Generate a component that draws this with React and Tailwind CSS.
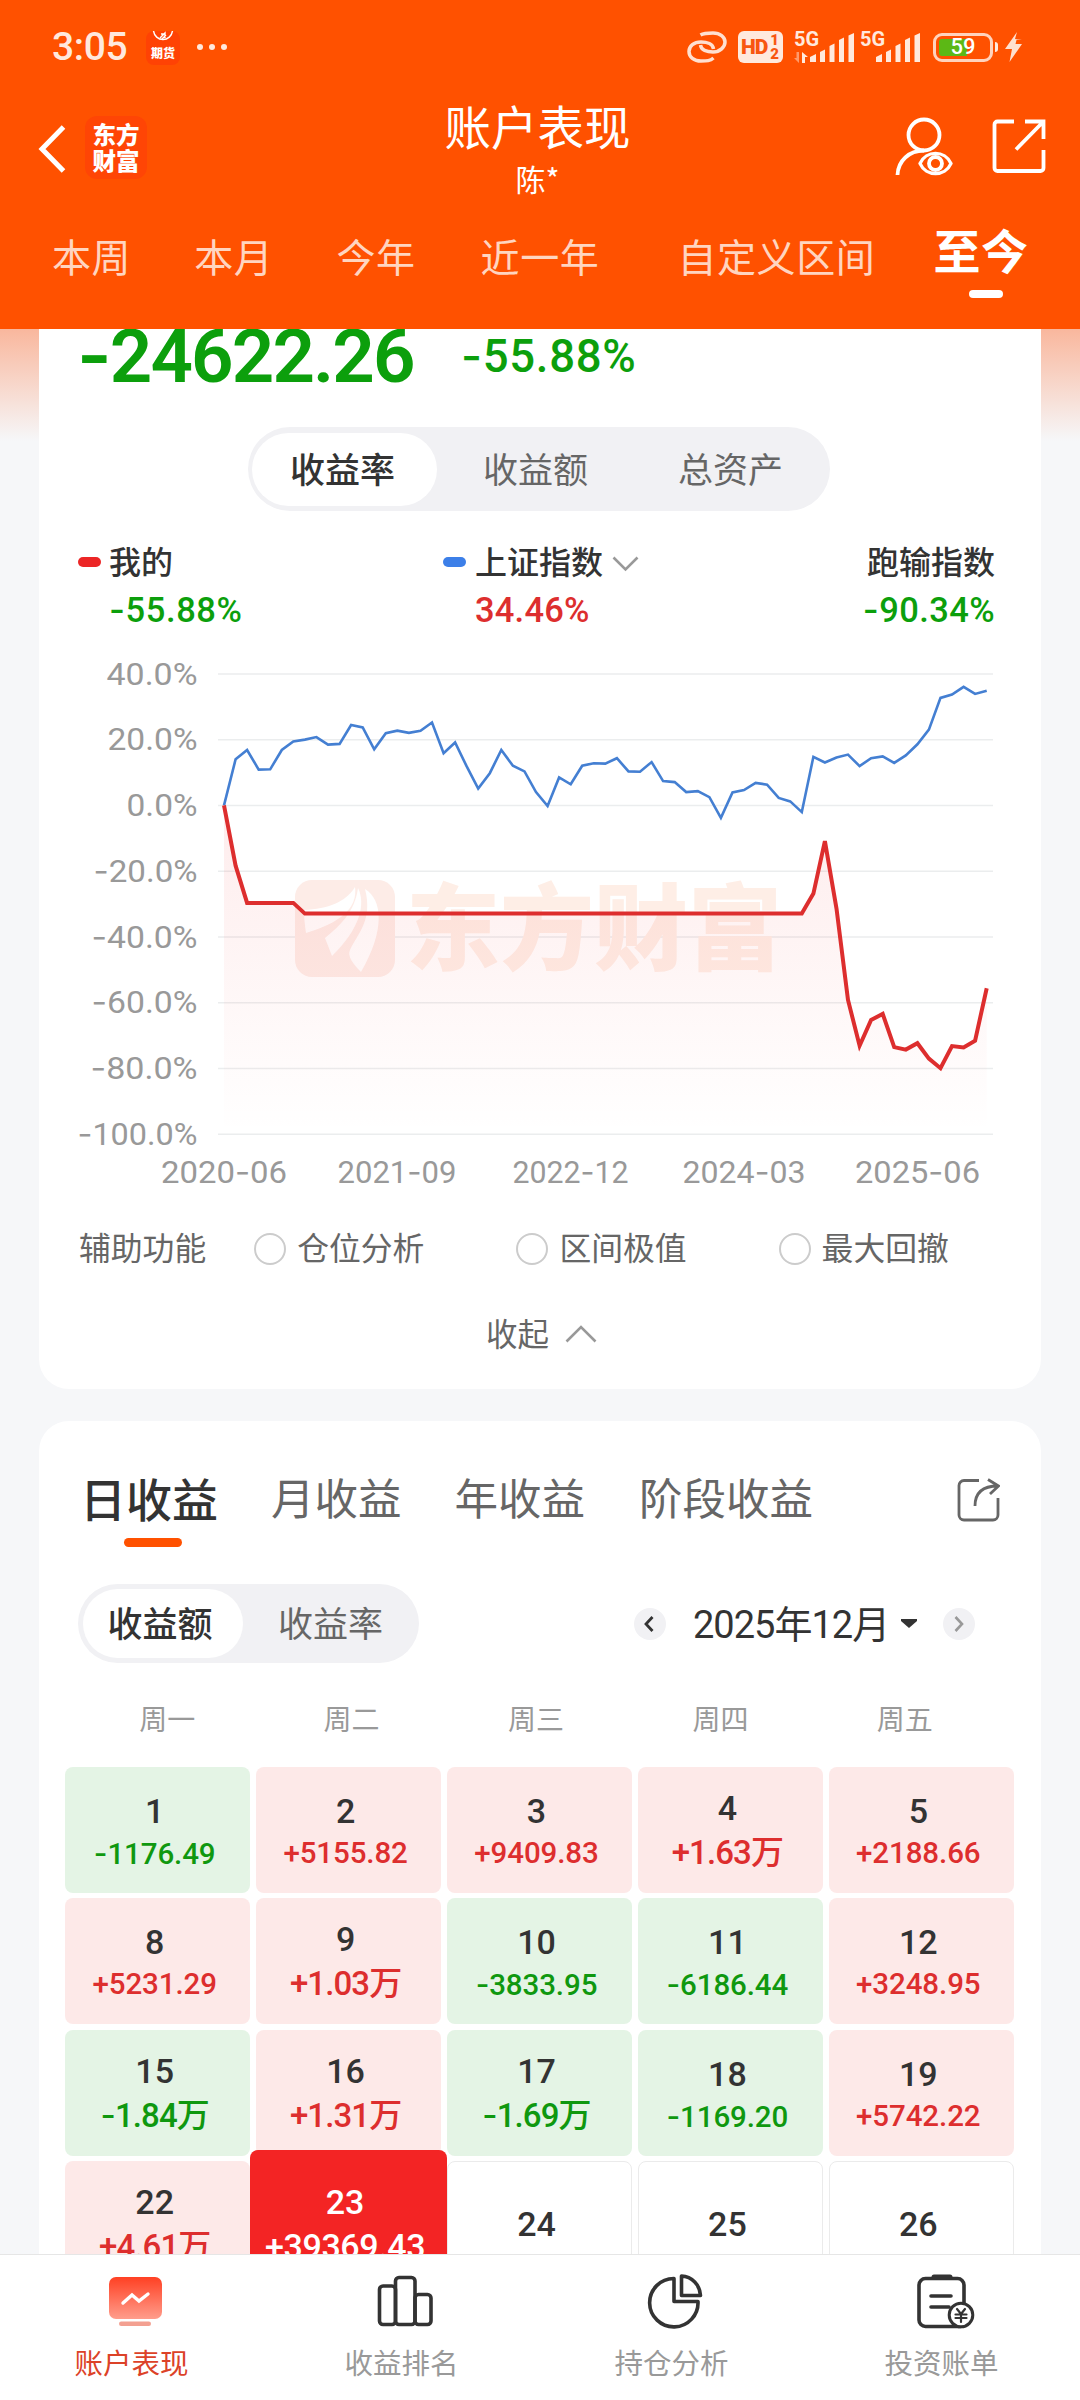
import React from "react";

const NUM = 'font-["Roboto","Noto_Sans_CJK_SC",sans-serif]';

/* Inter carries a wider hyphen, which reads better as a minus sign. */
function Num({ children, className = "" }) {
  const parts = String(children).split(/(-)/);
  return (
    <span className={`${NUM} whitespace-nowrap leading-none ${className}`}>
      {parts.map((p, i) =>
        p === "-" ? (
          <span key={i} className="font-[Inter,sans-serif]">-</span>
        ) : (
          p
        )
      )}
    </span>
  );
}

function Signal() {
  return (
    <svg width="45" height="30" viewBox="0 0 45 30" fill="#ffe9dd">
      <path d="M0 29v-5l6-3v8z" />
      <path d="M10 29V19l5-2.500V29z" />
      <path d="M19.500 29V13l5-2.500V29z" />
      <path d="M29 29V7l5-2.500V29z" />
      <path d="M38.500 29V2.500L44 0v29z" />
    </svg>
  );
}

function StatusBar() {
  return (
    <div className="flex h-[94px] items-center pl-[52px] text-[#ffe9dd]">
      <Num className="w-[94px] text-[39px] font-medium tracking-[-0.4px]">3:05</Num>
      <div className="mt-[1px] flex h-[34px] w-[34px] flex-col items-center rounded-[8px] bg-[#ff4204]">
        <svg width="22" height="13" viewBox="0 0 22 13" fill="none" stroke="#fff" strokeWidth="1.500">
          <path d="M1.500 0a9.600 10 0 0 0 19 0" />
          <path d="M8 7l5-5v5M9 3l4 0M10 8l4-4" strokeWidth="1.400" />
        </svg>
        <span className="mt-[2px] text-[12px] font-black leading-[14px] text-white">期货</span>
      </div>
      <div className="ml-[17px] flex gap-[6px]">
        <i className="size-[6px] rounded-full bg-[#ffe9dd]" />
        <i className="size-[6px] rounded-full bg-[#ffe9dd]" />
        <i className="size-[6px] rounded-full bg-[#ffe9dd]" />
      </div>
      <svg className="ml-[460px]" width="40" height="32" viewBox="0 0 40 32" fill="none" stroke="#ffe0d0" strokeWidth="3.500">
        <path d="M13.500 4C17 2 20 2 26 2c7 0 12 4 12 9s-5 10-12 10c-6 0-12-2-12.500-7" />
        <path d="M26.500 27C23 30 20 30 14 30 7 30 2 26 2 20.500S7 11 14 11c6 0 12 2 12.500 7" />
      </svg>
      <div className="ml-[11px] flex h-[32px] w-[45px] rounded-[6px] bg-[#ffe9dd] text-[#f8560f]">
        <span className="ml-[3px] font-[Roboto] text-[21px] font-black leading-[33px] tracking-[-1px]">HD</span>
        <span className="ml-[3px] flex flex-col pt-[2px] font-[Roboto] text-[15px] font-bold leading-[14px]">
          <b>1</b>
          <b>2</b>
        </span>
      </div>
      <div className="ml-[11px] flex h-[32px] items-end">
        <div className="flex h-[32px] w-[16px] flex-col">
          <span className="font-[Roboto] text-[20px] font-bold leading-[17px]">5G</span>
          <svg className="mt-[4px]" width="14" height="11" viewBox="0 0 14 11">
            <path d="M5 0v11L0 6h2.500V0z" fill="#ff9a6b" />
            <path d="M8 11V0l6 5h-3v6z" fill="#ffe9dd" />
          </svg>
        </div>
        <Signal />
      </div>
      <div className="ml-[5px] flex h-[32px] items-end">
        <div className="flex h-[32px] w-[16px] flex-col">
          <span className="font-[Roboto] text-[20px] font-bold leading-[17px]">5G</span>
        </div>
        <Signal />
      </div>
      <div className="ml-[12px] flex h-[29px] w-[60px] rounded-[9px] border-[3px] border-[#ffd3bd] p-[3px]">
        <div className="flex h-full w-full items-center justify-center rounded-[3px] bg-[linear-gradient(90deg,#5cb815_59%,transparent_59%)] font-[Roboto] text-[22px] font-medium leading-none text-white">
          59
        </div>
      </div>
      <i className="ml-[2px] h-[10px] w-[3px] rounded-r-[3px] bg-[#ffe9dd]" />
      <svg className="ml-[7px]" width="17" height="30" viewBox="0 0 17 30" fill="#ffe0d0">
        <path d="M12 0L0 17h7L4.500 30 17 12h-6.500l1-4H17l-7-1z" />
      </svg>
    </div>
  );
}

function Header() {
  return (
    <header className="flex h-[329px] shrink-0 flex-col bg-[#ff5100] text-white">
      <StatusBar />
      <div className="flex h-[106px] items-center">
        <div className="flex w-[300px] items-center pl-[38px]">
          <svg className="mt-[3px]" width="28" height="48" viewBox="0 0 28 48" fill="none" stroke="#fff" strokeWidth="5">
            <path d="M25.500 2L4 24l21.500 22" />
          </svg>
          <div className="ml-[19px] flex h-[63px] w-[62px] flex-col items-center justify-center rounded-[12px] bg-[#ff4505] text-[23.500px] font-black leading-[26px]">
            <span>东方</span>
            <span>财富</span>
          </div>
        </div>
        <div className="flex flex-1 flex-col items-center pr-[5px]">
          <h1 className="text-[46.500px] leading-[47px]">账户表现</h1>
          <span className="mt-[15px] text-[30px] leading-[30px]">陈*</span>
        </div>
        <div className="flex w-[300px] justify-end pr-[34px]">
          <svg width="58" height="60" viewBox="0 0 58 60" fill="none" stroke="#fff" strokeWidth="3.800">
            <circle cx="29" cy="18" r="15.500" />
            <path d="M2.500 58C3 44 14 33.500 29 33.500" />
            <path d="M25 46.500C31 33 50 33 56 46.500 50 60 31 60 25 46.500z" strokeWidth="3.200" />
            <circle cx="40.500" cy="46.500" r="6.500" />
          </svg>
          <svg className="ml-[39px] mt-[2px]" width="54" height="54" viewBox="0 0 54 54" fill="none" stroke="#fff" strokeWidth="3.800">
            <path d="M22 2.500H5.500a3 3 0 0 0-3 3V49a3 3 0 0 0 3 3H48.500a3 3 0 0 0 3-3V31" />
            <path d="M33 2.500h18.500V20M51 3L24 30.500" />
          </svg>
        </div>
      </div>
      <nav className="flex h-[128px] items-start pl-[52px] text-[39px] leading-[39px] tracking-[0.6px] text-[#ffd5c0]">
        <span className="mt-[36px]">本周</span>
        <span className="ml-[63px] mt-[36px]">本月</span>
        <span className="ml-[63px] mt-[36px]">今年</span>
        <span className="ml-[65px] mt-[36px]">近一年</span>
        <span className="ml-[78px] mt-[36px]">自定义区间</span>
        <span className="ml-[58px] mt-[25px] flex flex-col items-center text-[47px] font-bold leading-[47px] text-white">
          至今
          <i className="ml-[9px] mt-[18px] h-[8px] w-[34px] rounded-full bg-white" />
        </span>
      </nav>
    </header>
  );
}

/* Vertical positions of the monthly points, 2.8 units per pixel from the top of the plot. */
const INDEX = [
  463, 334, 308, 363, 362, 308, 284, 279, 272, 293, 291, 238, 245, 306, 261, 254, 260, 254, 231, 317,
  287, 354, 416, 373, 308, 352, 368, 426, 465, 385, 404, 352, 345, 346, 331, 368, 369, 342, 395, 398,
  426, 423, 440, 498, 427, 420, 400, 405, 442, 452, 482, 327, 343, 329, 321, 353, 331, 326, 344, 323,
  292, 251, 162, 153, 131, 151, 142,
];
const MINE = [
  463, 632, 736, 736, 736, 736, 736, ...Array(44).fill(766), 710, 563, 752, 1008, 1136, 1064, 1047,
  1140, 1147, 1129, 1172, 1199, 1137, 1141, 1122, 975,
];
const X0 = 224;
const STEP = 11.556;
const points = (data) =>
  data.map((v, i) => `${(X0 + i * STEP).toFixed(1)},${(640 + v / 2.8).toFixed(1)}`).join(" ");

const Y_LABELS = [
  ["40.0%", 91],
  ["20.0%", 90],
  ["0.0%", 71],
  ["-20.0%", 104],
  ["-40.0%", 106],
  ["-60.0%", 106],
  ["-80.0%", 107],
  ["-100.0%", 120],
];
const X_LABELS = [
  ["2020-06", 224, 126],
  ["2021-09", 397, 119],
  ["2022-12", 570.5, 116],
  ["2024-03", 744, 123],
  ["2025-06", 917.5, 125],
];

function SvgNum({ text }) {
  return text.split(/(-)/).filter(Boolean).map((p, i) =>
    p === "-" ? (
      <tspan key={i} fontFamily="Inter">-</tspan>
    ) : (
      <tspan key={i}>{p}</tspan>
    )
  );
}

function Chart() {
  return (
    <svg className="block" width="1002" height="560" viewBox="39 640 1002 560">
      <defs>
        <linearGradient id="area" x1="0" x2="0" y1="805" y2="1134" gradientUnits="userSpaceOnUse">
          <stop offset="0" stopColor="#f22323" stopOpacity="0.085" />
          <stop offset="1" stopColor="#f22323" stopOpacity="0" />
        </linearGradient>
      </defs>
      {Y_LABELS.map(([label, w], i) => (
        <g key={label}>
          <line x1="218" x2="993" y1={673.9 + i * 65.77} y2={673.9 + i * 65.77} stroke="#ebedee" strokeWidth="1.500" />
          <text x={197.5 - w} y={684.5 + i * 65.77} textLength={w} lengthAdjust="spacingAndGlyphs" fontSize="31.500" fontFamily="Roboto" fill="#999">
            <SvgNum text={label} />
          </text>
        </g>
      ))}
      <g fill="#fdece7">
        <rect x="295" y="880" width="100" height="97" rx="17" />
        <text x="406" y="963" fontSize="94" fontWeight="900" textLength="376" fontFamily="Noto Sans CJK SC" fill="#feeee6">
          东方财富
        </text>
      </g>
      <g fill="#fff">
        <path d="M304 910c24-1 42-8 51-23 3 21-15 36-49 46-1-8-2-14-2-23z" />
        <path d="M358 888c8 16 2 41-26 68l-7-18c16-13 30-27 33-50z" />
        <path d="M365 889c18 11 20 42-4 83-8-8-14-16-11-22 8-17 23-30 15-61z" />
      </g>
      <polygon points={`${X0},805.4 ${points(MINE)} 986.7,1134 ${X0},1134`} fill="url(#area)" />
      <polyline points={points(INDEX)} fill="none" stroke="#447fd2" strokeWidth="2.600" />
      <polyline points={points(MINE)} fill="none" stroke="#dd2e2e" strokeWidth="4" />
      {X_LABELS.map(([label, cx, w]) => (
        <text key={label} x={cx - w / 2} y="1182.500" textLength={w} lengthAdjust="spacingAndGlyphs" fontSize="31.500" fontFamily="Roboto" fill="#999">
          <SvgNum text={label} />
        </text>
      ))}
    </svg>
  );
}

function Option({ children, className }) {
  return (
    <span className={`flex items-center ${className}`}>
      <i className="mr-[11px] size-[32px] rounded-full border-2 border-[#ccc]" />
      <span className="pb-[4px]">{children}</span>
    </span>
  );
}

function PerformanceCard() {
  return (
    <section className="mx-[39px] h-[1060px] shrink-0 rounded-b-[30px] bg-white">
      <div className="flex h-[55px] items-center pl-[38px] text-[#0c9f0c]">
        <Num className="w-[384px] text-[74.500px] font-semibold tracking-[-1.9px]">-24622.26</Num>
        <Num className="text-[45.500px] font-medium tracking-[0.7px]">-55.88%</Num>
      </div>
      <div className="ml-[209px] mt-[43px] flex h-[84px] w-[582px] items-center rounded-full bg-[#f1f1f4] pl-[4px] text-[35px] leading-none text-[#666]">
        <span className="flex h-[73px] w-[185px] items-center justify-center rounded-full bg-white pb-[4px] pr-[4px] font-medium text-[#333]">
          收益率
        </span>
        <span className="ml-[46px] pb-[4px]">收益额</span>
        <span className="ml-[90px] pb-[4px]">总资产</span>
      </div>
      <div className="mt-[33px] flex h-[96px] pl-[39px] pr-[46px] text-[32px] leading-[32px] text-[#333]">
        <div className="flex w-[365px]">
          <i className="mr-[8px] mt-[13px] h-[10px] w-[23px] rounded-[5px] bg-[#ec2626]" />
          <div className="flex flex-col gap-[17px] font-medium">
            <span>我的</span>
            <Num className="text-[34.500px] tracking-[0.6px] text-[#0c9f0c]">-55.88%</Num>
          </div>
        </div>
        <div className="flex flex-1">
          <i className="mr-[9px] mt-[13px] h-[10px] w-[23px] rounded-[5px] bg-[#3c7fe8]" />
          <div className="flex flex-col gap-[17px] font-medium">
            <span className="flex items-center">
              上证指数
              <svg className="ml-[9px] mt-[7px]" width="27" height="16" viewBox="0 0 27 16" fill="none" stroke="#999" strokeWidth="2.600">
                <path d="M1.500 1.500l12 12 12-12" />
              </svg>
            </span>
            <Num className="text-[34.500px] tracking-[0.2px] text-[#dd2e2e]">34.46%</Num>
          </div>
        </div>
        <div className="flex flex-col items-end gap-[17px] font-medium">
          <span>跑输指数</span>
          <Num className="text-[34.500px] tracking-[0.4px] text-[#0c9f0c]">-90.34%</Num>
        </div>
      </div>
      <Chart />
      <div className="flex h-[98px] items-center pl-[40px] text-[31.800px] leading-none text-[#666]">
        <span className="pb-[4px]">辅助功能</span>
        <Option className="ml-[48px]">仓位分析</Option>
        <Option className="ml-[92px]">区间极值</Option>
        <Option className="ml-[92px]">最大回撤</Option>
      </div>
      <div className="flex h-[74px] items-center pl-[447px] text-[31.500px] leading-none text-[#666]">
        <span className="pb-[4px]">收起</span>
        <svg className="ml-[16px] mb-[3px]" width="32" height="18" viewBox="0 0 32 18" fill="none" stroke="#999" strokeWidth="2.600">
          <path d="M1.500 16.500L16 2l14.500 14.500" />
        </svg>
      </div>
    </section>
  );
}

const DAYS = [
  [1, "-1176.49"], [2, "+5155.82"], [3, "+9409.83"], [4, "+1.63万"], [5, "+2188.66"],
  [8, "+5231.29"], [9, "+1.03万"], [10, "-3833.95"], [11, "-6186.44"], [12, "+3248.95"],
  [15, "-1.84万"], [16, "+1.31万"], [17, "-1.69万"], [18, "-1169.20"], [19, "+5742.22"],
  [22, "+4.61万"], [23, "+39369.43", true], [24], [25], [26],
];

function Day({ day, value, today }) {
  if (!value) {
    return (
      <div className="flex h-[126px] items-center justify-center rounded-[8px] border border-[#ebebeb] pr-[6px]">
        <Num className="text-[34px] font-medium text-[#333]">{day}</Num>
      </div>
    );
  }
  if (today) {
    return (
      <div className="relative z-10 -mx-[6px] -mt-[11px] flex h-[148px] flex-col items-center rounded-[8px] bg-[#f32424] pr-[7px] pt-[35px] text-white">
        <Num className="text-[34px] font-medium">{day}</Num>
        <Num className="mt-[10px] text-[34px] font-medium tracking-[-0.4px]">{value}</Num>
      </div>
    );
  }
  const wide = value.endsWith("万");
  const up = value[0] === "+";
  return (
    <div
      className={`flex h-[126px] flex-col items-center rounded-[8px] pr-[6px] ${
        up ? "bg-[#fde9e8] text-[#dd2e2e]" : "bg-[#e4f4e5] text-[#0f980f]"
      } ${wide ? "pt-[24px]" : "pt-[27px]"}`}
    >
      <Num className="text-[34px] font-medium text-[#333]">{day}</Num>
      <Num
        className={
          wide
            ? "mt-[11px] text-[33px] font-medium tracking-[-0.9px]"
            : "mt-[11px] text-[29.500px] font-medium tracking-[-0.1px]"
        }
      >
        {value}
      </Num>
    </div>
  );
}

function CalendarCard() {
  return (
    <section className="mx-[39px] mt-[32px] h-[1000px] shrink-0 rounded-t-[30px] bg-white">
      <div className="flex h-[163px] items-start pl-[41px] pt-[54px] text-[43.500px] leading-[44px] text-[#666]">
        <span className="flex flex-col items-center text-[46px] font-medium text-[#333]">
          日收益
          <i className="ml-[8px] mt-[19px] h-[9px] w-[58px] rounded-full bg-[#ff5100]" />
        </span>
        <span className="ml-[53px]">月收益</span>
        <span className="ml-[53px]">年收益</span>
        <span className="ml-[54px]">阶段收益</span>
        <svg className="ml-[144px] mt-[3px]" width="43" height="44" viewBox="0 0 43 44" fill="none" stroke="#666" strokeWidth="2.800">
          <path d="M22 2.500H7a5 5 0 0 0-5 5V37a5 5 0 0 0 5 5h29a5 5 0 0 0 5-5V20" />
          <path d="M18 28C18 14 26 8 41 8M31 1.500L41.500 8 33 16" />
        </svg>
      </div>
      <div className="flex h-[79px] items-center pl-[39px]">
        <div className="flex h-[79px] w-[341px] items-center rounded-full bg-[#f1f1f4] pl-[5px] text-[35px] leading-none text-[#666]">
          <span className="flex h-[69px] w-[160px] items-center justify-center rounded-full bg-white pb-[4px] pr-[6px] font-medium text-[#333]">
            收益额
          </span>
          <span className="ml-[35px] pb-[4px]">收益率</span>
        </div>
        <span className="ml-[215px] flex size-[32px] items-center justify-center rounded-full bg-[#f1f1f4] pr-[2px]">
          <svg width="10" height="16" viewBox="0 0 10 16" fill="none" stroke="#333" strokeWidth="2.800">
            <path d="M8.500 1L2 8l6.500 7" />
          </svg>
        </span>
        <Num className="ml-[27px] mt-[2px] w-[208px] text-[38px] tracking-[-1px] text-[#333]">2025年12月</Num>
        <svg width="16" height="9" viewBox="0 0 16 9" fill="#333">
          <path d="M0 0h16v2L8 9 0 2z" />
        </svg>
        <span className="ml-[26px] flex size-[32px] items-center justify-center rounded-full bg-[#f1f1f4]">
          <svg width="10" height="16" viewBox="0 0 10 16" fill="none" stroke="#999" strokeWidth="2.600">
            <path d="M1.500 1L8 8l-6.500 7" />
          </svg>
        </span>
      </div>
      <div className="ml-[36px] grid h-[104px] w-[922px] grid-cols-5 items-center pt-[6px] text-center text-[28px] leading-none text-[#999]">
        {["周一", "周二", "周三", "周四", "周五"].map((d) => (
          <span key={d}>{d}</span>
        ))}
      </div>
      <div className="ml-[26px] grid w-[949px] grid-cols-5 gap-x-[5.500px] gap-y-[5.300px]">
        {DAYS.map(([day, value, today]) => (
          <Day key={day} day={day} value={value} today={today} />
        ))}
      </div>
    </section>
  );
}

function BottomNav() {
  return (
    <nav className="grid h-[146px] shrink-0 grid-cols-4 border-t border-[#e6e6e6] bg-white text-[28.500px] leading-none text-[#999]">
      <div className="flex flex-col items-center pt-[19px]">
        <svg width="60" height="58" viewBox="0 0 60 58">
          <defs>
            <linearGradient id="board" x1="0" x2="0" y1="0" y2="1">
              <stop offset="0" stopColor="#ff4023" />
              <stop offset="1" stopColor="#ff9d8c" />
            </linearGradient>
          </defs>
          <rect x="4" y="3" width="53" height="42" rx="7" fill="url(#board)" />
          <rect x="14" y="47.500" width="32" height="4.500" rx="2.200" fill="#f3a091" />
          <path d="M18 29l9-8 7 6 9-7" fill="none" stroke="#fff" strokeWidth="3.400" strokeLinecap="round" />
        </svg>
        <span className="mr-[7px] mt-[16px] text-[#dc4228]">账户表现</span>
      </div>
      <div className="flex flex-col items-center pt-[19px]">
        <svg width="60" height="58" viewBox="0 0 60 58" fill="none" stroke="#333" strokeWidth="3.600">
          <rect x="4.500" y="12" width="16" height="38.500" rx="3.500" />
          <rect x="20.500" y="3.500" width="19.500" height="47" rx="3.500" />
          <rect x="40" y="20.500" width="16" height="30" rx="3.500" />
        </svg>
        <span className="mr-[7px] mt-[16px]">收益排名</span>
      </div>
      <div className="flex flex-col items-center pt-[19px]">
        <svg width="60" height="58" viewBox="0 0 60 58" fill="none" stroke="#333" strokeWidth="3.600" strokeLinejoin="round">
          <path d="M29 4.500A24.200 24.200 0 1 0 53 27.500H29z" />
          <path d="M36.500 2C47 2.500 55 11 55.500 21.500h-19z" />
        </svg>
        <span className="mr-[7px] mt-[16px]">持仓分析</span>
      </div>
      <div className="flex flex-col items-center pt-[19px]">
        <svg width="60" height="58" viewBox="0 0 60 58" fill="none" stroke="#333" strokeWidth="3.600" strokeLinecap="round">
          <path d="M49 30V11a6.500 6.500 0 0 0-6.500-6.500h-32A6.500 6.500 0 0 0 4 11v35a6.500 6.500 0 0 0 6.500 6.500H46" />
          <path d="M19 3h16" strokeWidth="5" />
          <path d="M16 22h20M16 33h18" />
          <circle cx="46" cy="41" r="11.800" fill="#fff" strokeWidth="3" />
          <path d="M42 35l4 5 4-5M46 40v8M40.500 40.500h11M40.500 44h11" strokeWidth="2.200" />
        </svg>
        <span className="mr-[7px] mt-[16px]">投资账单</span>
      </div>
    </nav>
  );
}

export default function App() {
  return (
    <div className='flex h-[2400px] w-[1080px] flex-col overflow-hidden bg-[#f6f7f9] font-["Noto_Sans_CJK_SC",sans-serif]'>
      <Header />
      <main className="flex h-[1925px] shrink-0 flex-col overflow-hidden bg-[linear-gradient(180deg,#f9b79d_0px,#f6f7f9_112px)]">
        <PerformanceCard />
        <CalendarCard />
      </main>
      <BottomNav />
    </div>
  );
}
